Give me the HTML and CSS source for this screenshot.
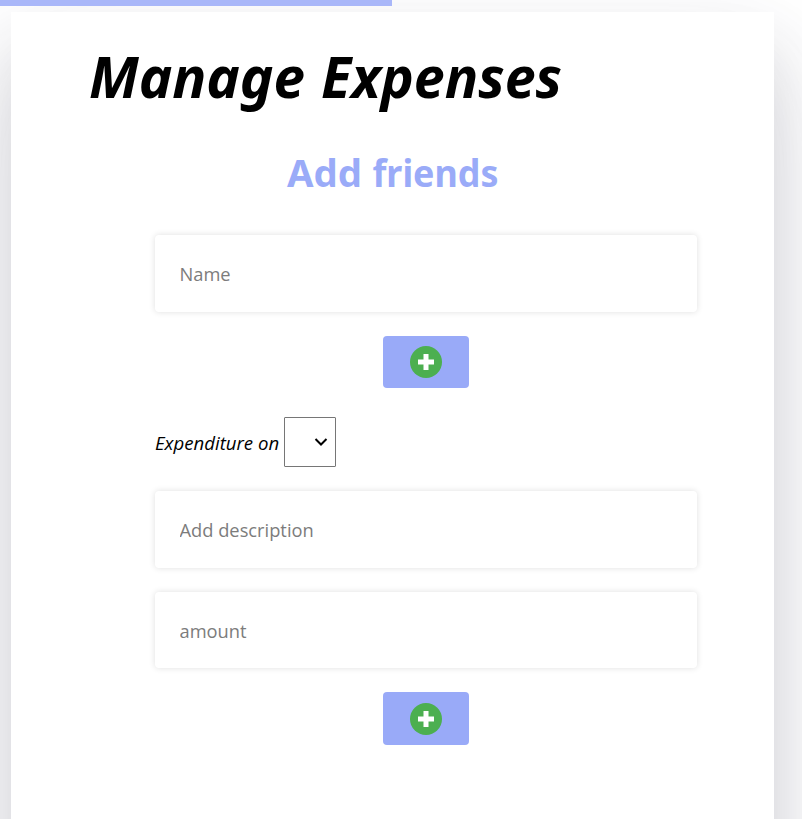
FILE: index.html
```html
<!DOCTYPE html>
<html lang="en">
<head>
<meta charset="utf-8">
<title>Manage Expenses</title>
<link rel="stylesheet" href="styles.css">
</head>
<body>
<div class="progress"></div>
<main class="card">
  <h1 class="title"><svg class="fit" width="472" height="70"><text x="0" y="48" textLength="216" lengthAdjust="spacingAndGlyphs">Manage</text> <text x="232" y="48" textLength="241" lengthAdjust="spacingAndGlyphs">Expenses</text></svg></h1>
  <h2 class="subtitle"><svg class="fit" width="211" height="50"><text x="-1" y="36" textLength="75" lengthAdjust="spacingAndGlyphs">Add</text> <text x="84.5" y="36" textLength="126" lengthAdjust="spacingAndGlyphs">friends</text></svg></h2>
  <form class="form">
    <input class="field" type="text" placeholder="Name">
    <button class="add" type="button" aria-label="Add friend"><svg width="32" height="32" viewBox="0 0 32 32"><circle cx="16" cy="16" r="16" fill="#4caf50"/><path d="M13.5 8h5v5.5H24v5h-5.5V24h-5v-5.5H8v-5h5.5z" fill="#fff"/></svg></button>
    <div class="spender"><label class="label">Expenditure on</label><div class="select"><svg width="14" height="10" viewBox="0 0 14 10"><path d="M1.5 2 7 7.5 12.5 2" fill="none" stroke="#000" stroke-width="2"/></svg></div></div>
    <input class="field" type="text" placeholder="Add description">
    <input class="field amount" type="text" placeholder="amount">
    <button class="add last" type="button" aria-label="Add expense"><svg width="32" height="32" viewBox="0 0 32 32"><circle cx="16" cy="16" r="16" fill="#4caf50"/><path d="M13.5 8h5v5.5H24v5h-5.5V24h-5v-5.5H8v-5h5.5z" fill="#fff"/></svg></button>
  </form>
</main>
</body>
</html>
```
FILE: styles.css
```css
* { box-sizing: border-box; }
html { overflow: hidden; }
body { margin: 0; height: 819px; overflow: hidden; background: #fff; font-family: "Noto Sans", "Open Sans", sans-serif; }
.progress { position: relative; z-index: 1; width: 392px; height: 6px; background: #a9b7f9; }
.card { width: 763px; height: 1000px; margin: 6px 0 0 11px; padding-top: 38px; background: #fff; box-shadow: 0 50px 100px rgba(50,50,93,.15), 0 35px 60px rgba(0,0,0,.1); }
.title { margin: 0 0 0 78px; height: 70px; font-size: 57px; font-style: italic; font-weight: 700; line-height: 1; }
.subtitle { margin: 31px 0 0 277px; height: 50px; font-size: 38px; font-weight: 700; color: #9aabf8; line-height: 1; }
.fit { display: block; overflow: visible; fill: currentColor; }
.form { display: flex; flex-direction: column; align-items: center; width: 542px; margin: 34px 0 0 144px; }
.field { width: 542px; height: 77px; margin: 0 0 1px; padding: 0 24.5px; border: 0; border-radius: 4px; background: #fff; box-shadow: 0 0 6px rgba(0,0,0,.13); font: 400 18.3px "Open Sans", sans-serif; }
.field::placeholder { color: #7c7c7c; opacity: 1; }
.add { display: flex; align-items: center; justify-content: center; width: 86px; height: 52px; margin: 23px 0 29px; padding: 0; border: 0; border-radius: 4px; background: #99aaf8; }
.spender { display: flex; align-items: center; align-self: stretch; height: 50px; margin-bottom: 24px; }
.label { width: 129px; font: italic 400 18.6px "Open Sans", sans-serif; white-space: nowrap; }
.select { display: flex; align-items: center; justify-content: flex-end; width: 52px; height: 50px; padding-right: 7px; border: 1px solid #767676; border-radius: 1px; background: #fff; }
.amount { margin-top: 23px; height: 76px; padding-top: 1px; }
.last { height: 53px; margin-bottom: 0; }
```
